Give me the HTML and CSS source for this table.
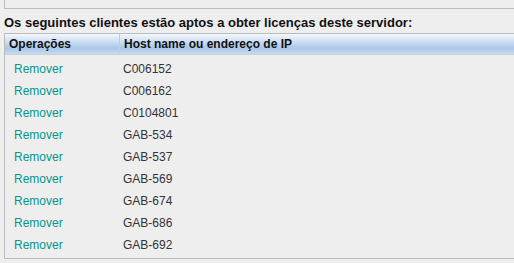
FILE: index.html
```html
<!DOCTYPE html>
<html lang="pt">

<head>
    <meta charset="UTF-8">
    <title>Clientes de licença</title>
    <link rel="stylesheet" href="styles.css">
</head>

<body>
    <div class="top-panel"></div>

    <h2 class="section-title">Os seguintes clientes estão aptos a obter licenças deste servidor:</h2>

    <div class="client-table">
        <div class="table-head">
            <div class="col-ops">Operações</div>
            <div class="col-host">Host name ou endereço de IP</div>
        </div>
        <div class="table-body">
            <div class="row"><a class="col-ops remove-link" href="#">Remover</a><span class="col-host">C006152</span></div>
            <div class="row"><a class="col-ops remove-link" href="#">Remover</a><span class="col-host">C006162</span></div>
            <div class="row"><a class="col-ops remove-link" href="#">Remover</a><span class="col-host">C0104801</span></div>
            <div class="row"><a class="col-ops remove-link" href="#">Remover</a><span class="col-host">GAB-534</span></div>
            <div class="row"><a class="col-ops remove-link" href="#">Remover</a><span class="col-host">GAB-537</span></div>
            <div class="row"><a class="col-ops remove-link" href="#">Remover</a><span class="col-host">GAB-569</span></div>
            <div class="row"><a class="col-ops remove-link" href="#">Remover</a><span class="col-host">GAB-674</span></div>
            <div class="row"><a class="col-ops remove-link" href="#">Remover</a><span class="col-host">GAB-686</span></div>
            <div class="row"><a class="col-ops remove-link" href="#">Remover</a><span class="col-host">GAB-692</span></div>
        </div>
    </div>
</body>

</html>
```

FILE: styles.css
```css
body {
    font-family: "Liberation Sans", Arial, sans-serif;
    margin: 0;
    padding: 0 0 0 4px;
    background-color: #eeeeee;
    color: #333;
    overflow: hidden;
}

/* panel above, cut off by the window edge */
.top-panel {
    height: 8px;
    margin-right: -20px;
    border-left: 1px solid #bcbcbc;
    border-bottom: 1px solid #bcbcbc;
}

.section-title {
    font-size: 13px;
    font-weight: bold;
    color: #111;
    margin: 0;
    padding: 6px 0 0 0;
    line-height: 16px;
    white-space: nowrap;
}

.client-table {
    margin-top: 2px;
    margin-right: -20px;
    border: 1px solid #bcbcbc;
    padding-bottom: 2px;
}

.table-head {
    display: flex;
    height: 20px;
    border-bottom: 1px solid #cfcfcf;
    background: linear-gradient(#f4f8fc 0%, #cfe0f3 35%, #aac8ea 70%, #c4daf1 100%);
    font-size: 12px;
    font-weight: bold;
    color: #111;
}

.table-head div {
    line-height: 20px;
}

.table-head .col-ops {
    width: 110px;
    padding-left: 4px;
    border-right: 1px solid #c7cdd6;
}

.table-head .col-host {
    padding-left: 4px;
}

.table-body {
    padding-top: 3px;
}

.row {
    display: flex;
    height: 22px;
    align-items: center;
    font-size: 12px;
}

.row .col-ops {
    width: 109px;
    padding-left: 9px;
}

.remove-link {
    color: #00968a;
    text-decoration: none;
}

.row .col-host {
    color: #333;
}
```
